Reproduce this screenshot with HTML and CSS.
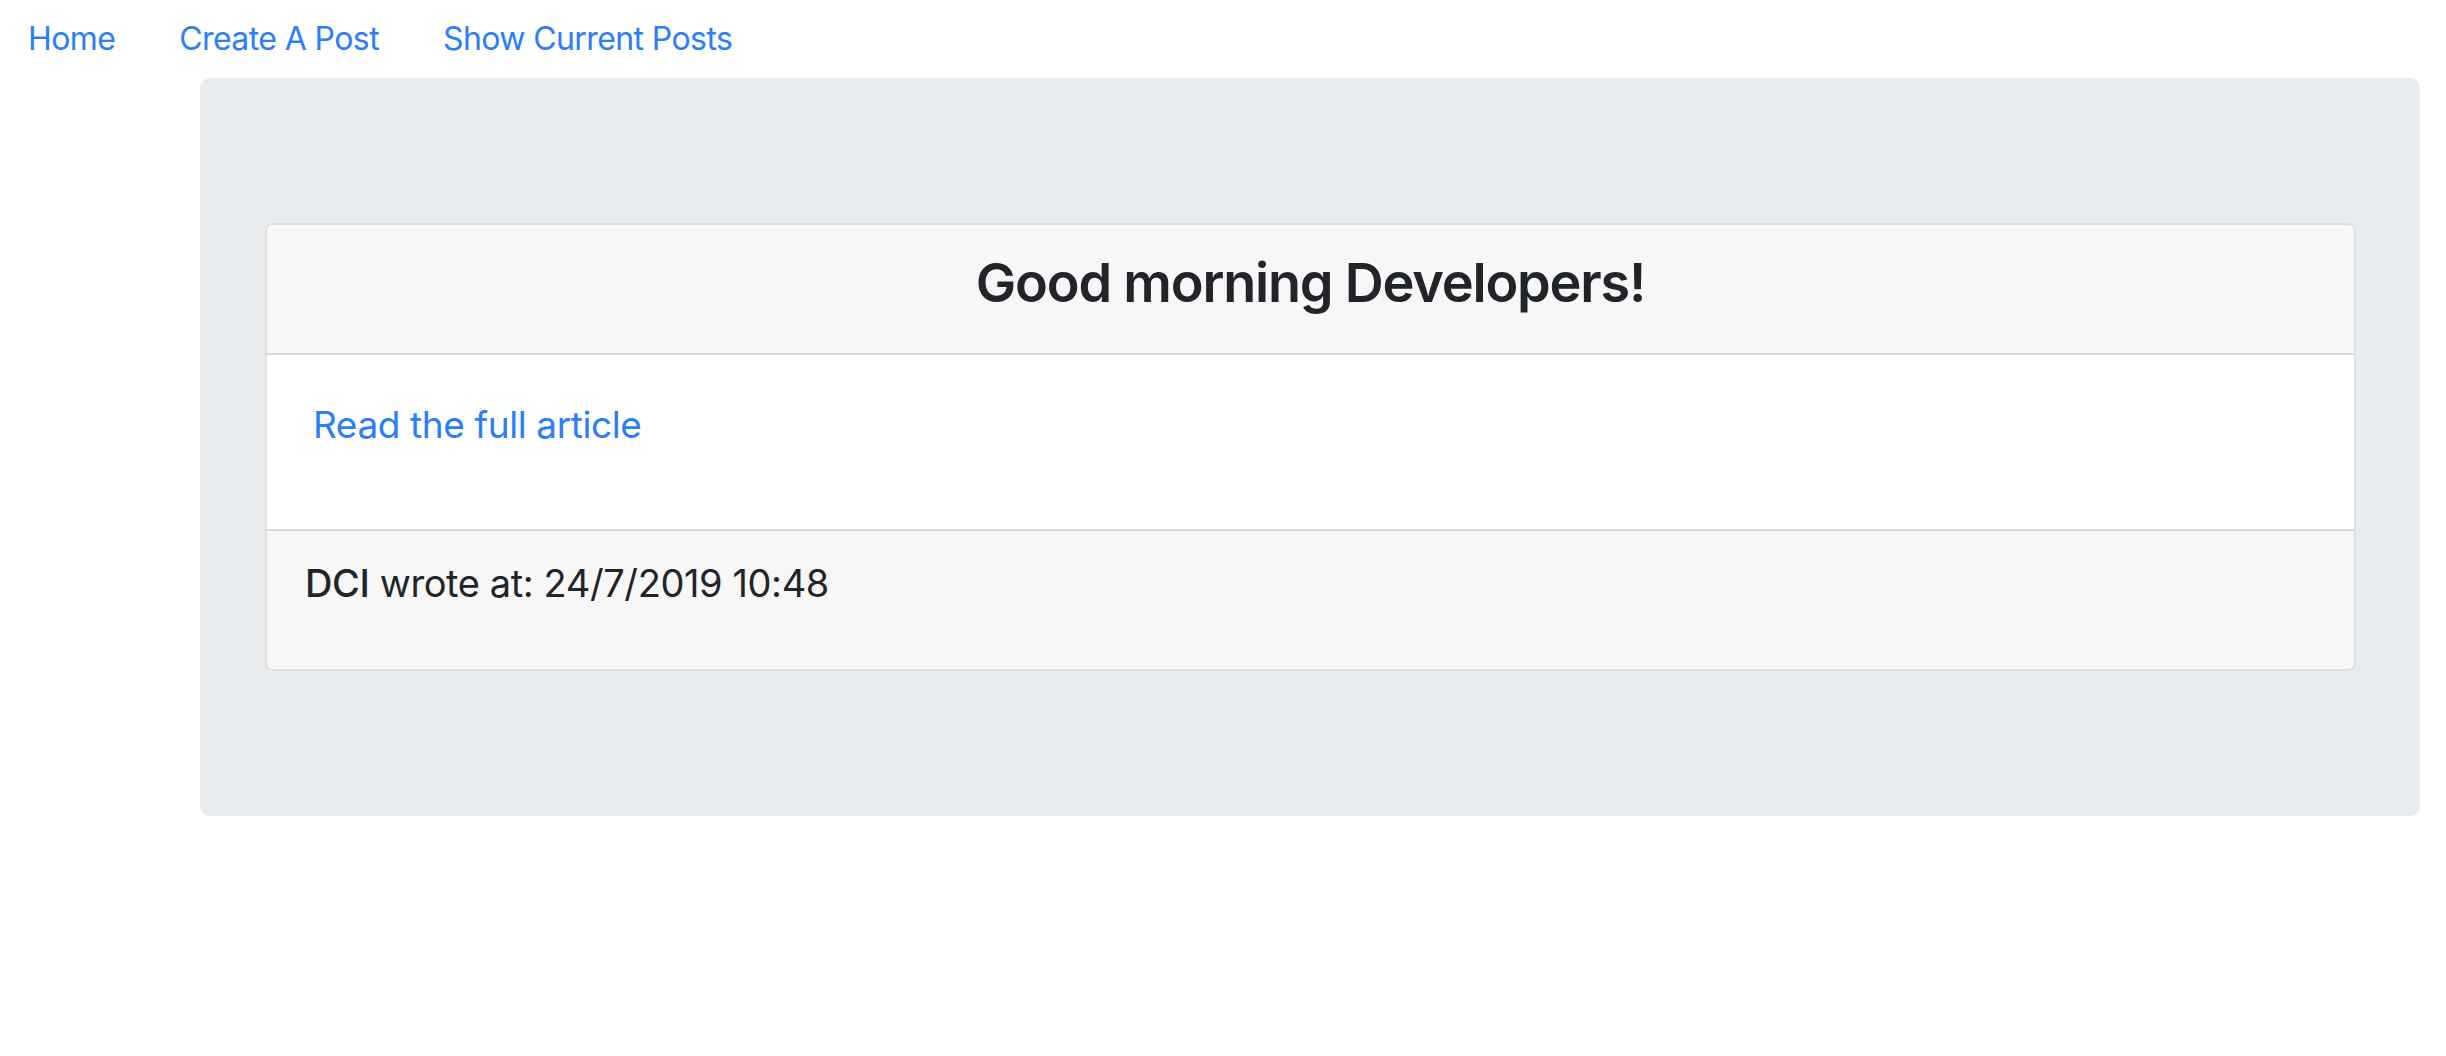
FILE: index.html
```html
<!DOCTYPE html>
<html lang="en">
<head>
<meta charset="utf-8">
<title>Posts</title>
<link rel="stylesheet" href="styles.css">
</head>
<body>
<nav class="nav">
  <a class="nav-link" href="#">Home</a>
  <a class="nav-link" href="#">Create A Post</a>
  <a class="nav-link" href="#">Show Current Posts</a>
</nav>
<main class="jumbotron">
  <section class="card">
    <header class="card-header">
      <h3 class="card-title">Good morning Developers!</h3>
    </header>
    <div class="card-body">
      <a class="read-link" href="#">Read the full article</a>
    </div>
    <footer class="card-footer">
      <p class="meta"><strong>DCI</strong> wrote at: 24/7/2019 10:48</p>
    </footer>
  </section>
</main>
</body>
</html>
```

FILE: styles.css
```css
* { box-sizing: border-box; }
html, body {
  margin: 0;
  padding: 0;
  background: #fff;
}
body {
  font-family: Inter, "Liberation Sans", sans-serif;
  color: #212529;
}
.nav {
  display: flex;
  height: 78px;
  align-items: flex-start;
}
.nav-link {
  display: block;
  padding: 15px 32px 15px 32px;
  font-size: 32px;
  line-height: 48px;
  letter-spacing: -0.6px;
  color: #2c7ef8;
  text-decoration: none;
}
.nav-link:first-child { padding-left: 28px; }
.jumbotron {
  margin: 0 26px 0 200px;
  height: 738px;
  background: #e9ecef;
  border-radius: 10px;
  padding: 145px 64px 0 65px;
}
.card {
  display: flex;
  flex-direction: column;
  background: #fff;
  border: 2px solid rgba(0,0,0,0.125);
  border-radius: 8px;
  overflow: hidden;
  height: 448px;
}
.card-header {
  background: #f7f7f7;
  border-bottom: 2px solid rgba(0,0,0,0.125);
  padding: 25px 40px 0;
  height: 130px;
}
.card-title {
  margin: 0;
  text-align: center;
  font-size: 54px;
  line-height: 65px;
  font-weight: 600;
  letter-spacing: -1.2px;
}
.card-body {
  height: 174px;
  padding: 43px 46px 0;
}
.read-link {
  font-size: 37px;
  line-height: 54px;
  letter-spacing: -0.4px;
  color: #2c7ef8;
  text-decoration: none;
}
.card-footer {
  flex: 1;
  background: #f7f7f7;
  border-top: 2px solid rgba(0,0,0,0.125);
  padding: 29px 38px 0;
}
.meta {
  margin: 0;
  font-size: 38px;
  line-height: 46px;
  letter-spacing: -0.4px;
}
.meta strong { font-weight: 500; }
```
